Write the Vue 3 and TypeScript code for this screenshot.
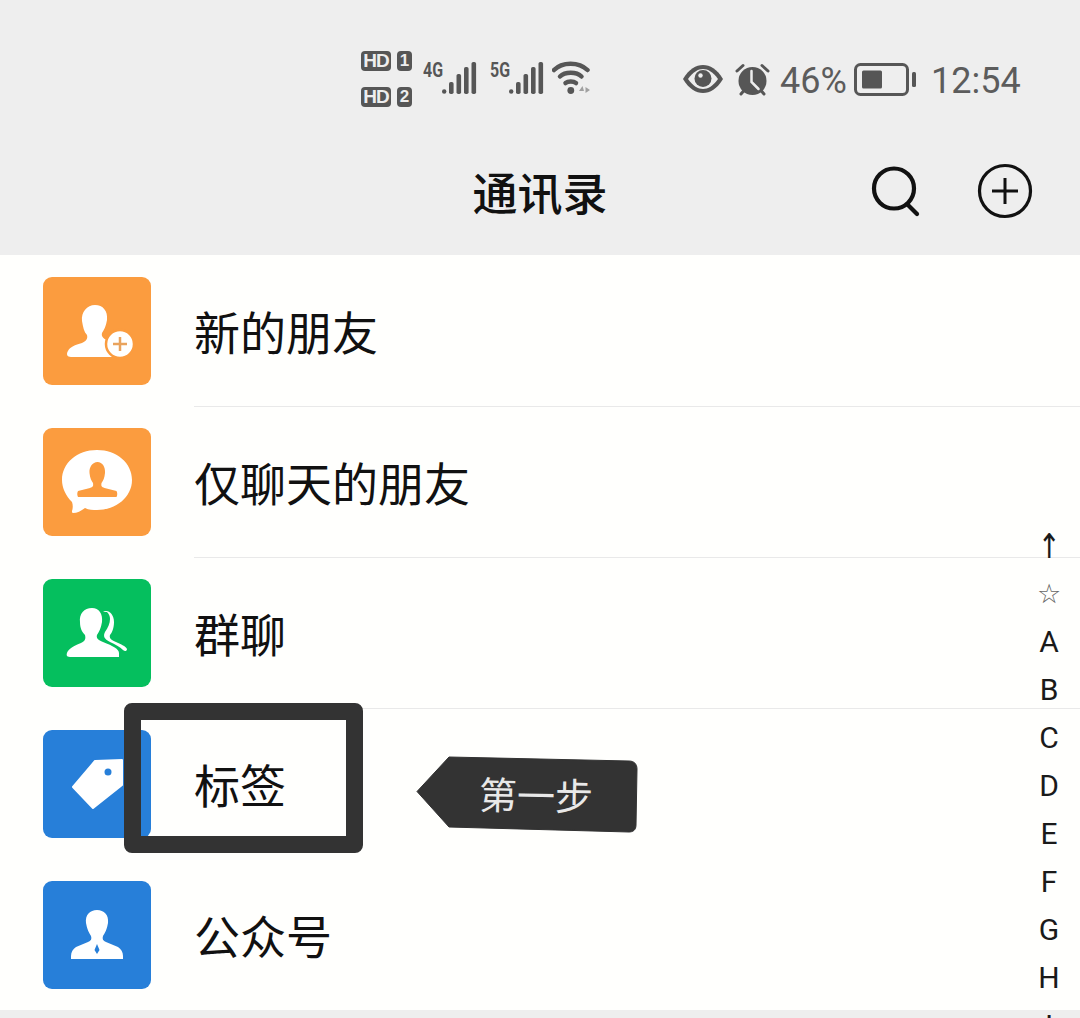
<script setup lang="ts">
interface Row {
  label: string
  tone: string
  icon: string
}
const rows: Row[] = [
  { label: '新的朋友', tone: 'orange', icon: 'add' },
  { label: '仅聊天的朋友', tone: 'orange', icon: 'chat' },
  { label: '群聊', tone: 'green', icon: 'group' },
  { label: '标签', tone: 'blue', icon: 'tag' },
  { label: '公众号', tone: 'blue', icon: 'official' },
]
const index: string[] = ['↑', '☆', 'A', 'B', 'C', 'D', 'E', 'F', 'G', 'H', 'I']
const bars = [
  { x: 7, y: 20 },
  { x: 14.5, y: 12 },
  { x: 22, y: 5 },
  { x: 29.5, y: 0 },
]
</script>

<template>
  <div class="screen">
    <header class="top">
      <div class="status">
        <div class="hd">
          <div class="hd-line"><span class="hd-tag">HD</span><span class="hd-num">1</span></div>
          <div class="hd-line"><span class="hd-tag">HD</span><span class="hd-num">2</span></div>
        </div>
        <div class="net net-4g">
          <span class="net-label">4G</span>
          <svg class="signal" width="35" height="32" viewBox="0 0 35 32">
            <circle cx="2.2" cy="29.5" r="2.2" fill="#565656" />
            <rect v-for="b in bars" :key="b.x" :x="b.x" :y="b.y" width="4.6" :height="32 - b.y" rx="1.8" fill="#565656" />
          </svg>
        </div>
        <div class="net net-5g">
          <span class="net-label">5G</span>
          <svg class="signal" width="35" height="32" viewBox="0 0 35 32">
            <circle cx="2.2" cy="29.5" r="2.2" fill="#565656" />
            <rect v-for="b in bars" :key="b.x" :x="b.x" :y="b.y" width="4.6" :height="32 - b.y" rx="1.800" fill="#565656" />
          </svg>
        </div>
        <svg class="wifi" width="42" height="34" viewBox="0 0 42 34">
          <path d="M2 9C10 .5 27 .5 35.500 9" fill="none" stroke="#565656" stroke-width="4.500" stroke-linecap="round" />
          <path d="M8 15.500C13 10.500 24.500 10.500 29.500 15.500" fill="none" stroke="#565656" stroke-width="4.500" stroke-linecap="round" />
          <path d="M13.500 22C16 20 21.500 20 24 22" fill="none" stroke="#565656" stroke-width="4.500" stroke-linecap="round" />
          <circle cx="18.800" cy="29.500" r="3.400" fill="#565656" />
          <path d="M27 30h5l-1.500-5zM33.500 26v6l4.500-3z" fill="#a0a0a0" />
        </svg>
        <svg class="eye" width="40" height="28" viewBox="0 0 40 28">
          <path d="M0 14C6 4 13 0 20 0s14 4 20 14c-6 10-13 14-20 14S6 24 0 14Z" fill="#565656" />
          <path d="M5 14C10 7 15 4 20 4s10 3 15 10c-5 7-10 10-15 10S10 21 5 14Z" fill="#eee" />
          <circle cx="20" cy="13.500" r="8.500" fill="#565656" />
          <circle cx="17.500" cy="10.500" r="2.200" fill="#eee" />
        </svg>
        <svg class="alarm" width="35" height="33" viewBox="0 0 35 33">
          <circle cx="17.500" cy="18" r="14" fill="#565656" />
          <path d="M2 8 8 2.500M33 8 27 2.500M6 31l3-3.500M29 31l-3-3.500" fill="none" stroke="#565656" stroke-width="3" stroke-linecap="round" />
          <path d="M16.500 8v11l7 7" fill="none" stroke="#eee" stroke-width="2.500" stroke-linecap="round" />
        </svg>
        <span class="pct">46%</span>
        <svg class="battery" width="63" height="33" viewBox="0 0 63 33">
          <rect x="1.500" y="1.500" width="52" height="30" rx="5" fill="none" stroke="#565656" stroke-width="3" />
          <rect x="8" y="7.500" width="20" height="18" rx="1.500" fill="#565656" />
          <rect x="58" y="9" width="4" height="15" rx="1.500" fill="#565656" />
        </svg>
        <span class="time">12:54</span>
      </div>
      <div class="bar">
        <h1 class="title">通讯录</h1>
        <svg class="search" width="50" height="54" viewBox="0 0 50 54">
          <circle cx="23" cy="23.500" r="20" fill="none" stroke="#111" stroke-width="4.200" />
          <path d="M37 40 46 49" fill="none" stroke="#111" stroke-width="4.200" stroke-linecap="round" />
        </svg>
        <svg class="plus" width="56" height="56" viewBox="0 0 56 56">
          <circle cx="28" cy="28" r="25.500" fill="none" stroke="#111" stroke-width="3.200" />
          <path d="M15 28H41M28 15V41" fill="none" stroke="#111" stroke-width="3" />
        </svg>
      </div>
    </header>

    <ul class="list">
      <li v-for="row in rows" :key="row.label" class="row">
        <div class="tile" :class="row.tone">
          <svg width="108" height="108" viewBox="0 0 108 108">
            <template v-if="row.icon === 'add'">
              <path d="M52 28c8 0 13 6 12 15-1 6-3 10-5 13-1 4 2 6 7 8l4 1v15H28c-4 0-5-3-3-6 2-4 7-6 14-8 4-2 6-4 5-8-3-3-4-8-5-14-1-9 5-16 13-16Z" fill="#fff" />
              <circle cx="77" cy="67" r="14" fill="#fff" stroke="#fb9c3f" stroke-width="2.500" />
              <path d="M70 67H84M77 60V74" fill="none" stroke="#e9a35d" stroke-width="2.500" />
            </template>
            <template v-else-if="row.icon === 'chat'">
              <path d="M54 22c20 0 35 13 35 30 0 17-16 30-35 30-4 0-8 0-12-2-4 3-8 5-12 5-1 0-1-1-1-2 1-3 1-6 0-9-6-6-10-14-10-22 0-17 15-30 35-30Z" fill="#fff" />
              <path d="M54.500 34c5 0 8 5 7.500 11-.5 5-2 8-3.500 10-.5 3 0 4 3 5l12 3c1 2 1 4 0 6H35c-1-2-1-4 0-6l12-3c3-1 3.500-2 3-5-1.500-2-3-5-3.500-10-.5-6 3-11 8-11Z" fill="#fb9c3f" />
            </template>
            <template v-else-if="row.icon === 'group'">
              <path d="M60 33c5-3 11 2 11 10 0 6-2 11-4 13-1 3 1 5 6 7 4 2 10 4 11 7 0 2-2 3-4 1-3-3-8-6-13-8-6-3-7-6-5-10 3-4 5-9 5-13 0-3-1-5-3-7Z" fill="#fff" />
              <path d="M49 29c7 0 11 6 10 14-1 6-3 10-5 13-1 3 1 5 6 7 10 4 16 7 16 11v4H27c-4 0-4-3-2-6 2-3 6-5 13-8 4-2 5-4 4-8-3-3-5-7-5-13-1-8 4-14 12-14Z" fill="#fff" />
            </template>
            <template v-else-if="row.icon === 'tag'">
              <path d="M30 57 52 31 79 30V55L50 78Z" fill="#fff" stroke="#fff" stroke-width="2" stroke-linejoin="round" />
              <circle cx="65" cy="42" r="3.500" fill="#277fd9" />
            </template>
            <template v-else>
              <path d="M54 29c7 0 12 5 11 13-1 6-3 10-5 13-1 3 0 5 3 6l12 5c3 2 5 5 5 9v3H28v-3c0-4 2-7 5-9l12-5c3-1 4-3 3-6-2-3-4-7-5-13-1-8 4-13 11-13Z" fill="#fff" />
              <path d="M54 63l2.500 6-2.500 4-2.500-4Z" fill="#277fd9" />
            </template>
          </svg>
        </div>
        <span class="name">{{ row.label }}</span>
      </li>
    </ul>
    <div class="foot"></div>

    <nav class="index">
      <span
        v-for="c in index"
        :key="c"
        class="letter"
        :class="{ star: c === '☆', arrow: c === '↑' }"
      >{{ c }}</span>
    </nav>

    <div class="frame"></div>
    <div class="callout">
      <svg width="222" height="78" viewBox="0 0 222 78">
        <path d="M1 36.500 33 2l180 4c5 0 8 3 8 8l-1 56c0 5-3 7-7 7L33 72Z" fill="#333" stroke="#333" stroke-linejoin="round" />
      </svg>
      <span class="callout-text">第一步</span>
    </div>
  </div>
</template>

<style>
html,
body {
  margin: 0;
  background: #fff;
}
</style>

<style scoped>
.screen {
  position: relative;
  width: 1080px;
  height: 1018px;
  overflow: hidden;
  background: #fffffd;
  font-family: "Noto Sans CJK SC", "Liberation Sans", sans-serif;
}
.top {
  height: 255px;
  background: #eee;
  display: flex;
  flex-direction: column;
}
.status {
  height: 150px;
  display: flex;
  align-items: flex-start;
  padding-left: 361px;
  box-sizing: border-box;
  color: #565656;
}
.hd {
  margin-top: 51px;
  display: flex;
  flex-direction: column;
  gap: 16px;
}
.hd-line {
  display: flex;
  gap: 6px;
  height: 20px;
}
.hd-tag,
.hd-num {
  display: flex;
  align-items: center;
  justify-content: center;
  background: #565656;
  color: #eee;
  font-family: "Liberation Sans", sans-serif;
  font-weight: 700;
  border-radius: 4px;
  height: 20px;
  font-size: 19px;
}
.hd-tag {
  width: 30px;
  letter-spacing: -1px;
}
.hd-num {
  width: 15px;
  font-size: 17px;
}
.net {
  position: relative;
  margin-top: 62px;
  width: 54px;
  height: 32px;
  display: flex;
  justify-content: flex-end;
}
.net-4g {
  margin-left: 11px;
}
.net-5g {
  margin-left: 13px;
}
.net-label {
  position: absolute;
  left: 0;
  top: 0;
  font-family: "Roboto", "Liberation Sans", sans-serif;
  font-weight: 700;
  font-size: 21px;
  line-height: 16px;
  transform: scaleX(0.76);
  transform-origin: left center;
}
.signal {
  display: block;
}
.wifi {
  margin: 61px 0 0 8px;
}
.eye {
  margin: 65px 0 0 89px;
}
.alarm {
  margin: 63px 0 0 12px;
}
.pct,
.time {
  font-family: "Roboto", "Liberation Sans", sans-serif;
  font-size: 36px;
  line-height: 36px;
  margin-top: 63px;
  color: #5c5c5c;
}
.pct {
  margin-left: 10px;
  width: 64px;
  white-space: nowrap;
}
.battery {
  margin: 63px 0 0 10px;
}
.time {
  margin-left: 14px;
}
.bar {
  position: relative;
  height: 105px;
  display: flex;
  align-items: flex-start;
  justify-content: flex-end;
}
.title {
  position: absolute;
  left: 0;
  right: 0;
  top: 7px;
  margin: 0;
  text-align: center;
  font-size: 45px;
  line-height: 70px;
  font-weight: 500;
  color: #111;
}
.search {
  margin-top: 15px;
}
.plus {
  margin: 13px 47px 0 56px;
}
.list {
  list-style: none;
  margin: 0;
  padding: 0;
}
.row {
  height: 151px;
  display: flex;
  align-items: center;
  padding-left: 43px;
  box-sizing: border-box;
  position: relative;
}
.row::after {
  content: "";
  position: absolute;
  left: 194px;
  right: 0;
  bottom: -1px;
  height: 1px;
  background: #e9e9e9;
}
.row:nth-child(n + 4)::after {
  display: none;
}
.tile {
  width: 108px;
  height: 108px;
  border-radius: 9px;
}
.tile svg {
  display: block;
}
.orange {
  background: #fb9c3f;
}
.green {
  background: #05bf5e;
}
.blue {
  background: #277fd9;
}
.name {
  margin: -1px 0 0 43px;
  font-size: 46px;
  line-height: 60px;
  color: #111;
}
.foot {
  height: 9px;
  background: #eee;
}
.index {
  position: absolute;
  right: 0;
  top: 522px;
  width: 62px;
  display: flex;
  flex-direction: column;
  align-items: center;
  font-family: "Roboto", "Liberation Sans", sans-serif;
  color: #1a1a1a;
}
.letter {
  height: 48px;
  line-height: 48px;
  font-size: 30px;
}
.star {
  font-family: "DejaVu Sans", sans-serif;
  color: #666;
  font-size: 27px;
}
.arrow {
  font-family: "DejaVu Sans", sans-serif;
  font-size: 34px;
  font-weight: 400;
  transform: scaleX(0.8);
}
.frame {
  position: absolute;
  left: 124px;
  top: 703px;
  width: 239px;
  height: 150px;
  box-sizing: border-box;
  border: 17px solid #333;
  border-radius: 8px;
}
.callout {
  position: absolute;
  left: 416px;
  top: 755px;
  width: 222px;
  height: 78px;
}
.callout svg {
  display: block;
}
.callout-text {
  position: absolute;
  left: 63px;
  top: 13px;
  font-size: 38px;
  line-height: 52px;
  color: #e8e8e8;
  white-space: nowrap;
  transform: rotate(1deg);
}
</style>
